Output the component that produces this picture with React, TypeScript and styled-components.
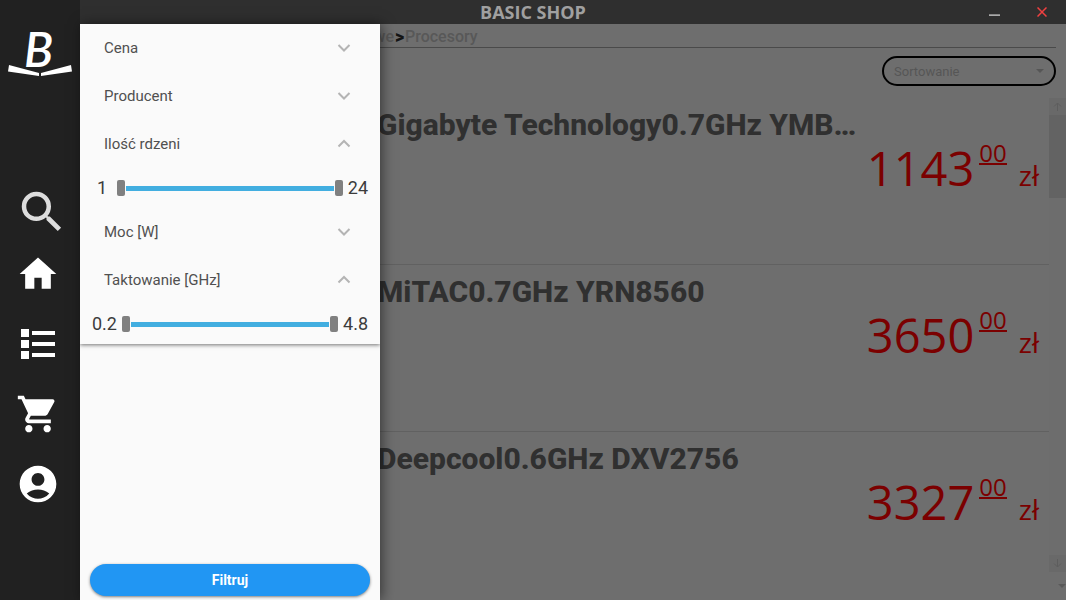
import React, { useState } from "react";
import styled, { createGlobalStyle } from "styled-components";
import {
  MdAccountCircle,
  MdHome,
  MdSearch,
  MdShoppingCart,
} from "react-icons/md";

const humanist = `"Open Sans", "Noto Sans", sans-serif`;

const GlobalStyle = createGlobalStyle`
  *, *::before, *::after { box-sizing: border-box; }
  html, body, #root { height: 100%; margin: 0; }
  body { font-family: Roboto, sans-serif; background: #6e6e6e; overflow: hidden; }
  button { border: 0; padding: 0; background: none; font: inherit; color: inherit; cursor: pointer; }
  svg { display: block; }
`;

const Shell = styled.div`
  display: flex;
  height: 100vh;
`;

const Sidebar = styled.nav`
  flex: 0 0 80px;
  display: flex;
  flex-direction: column;
  align-items: center;
  background: #212121;
  color: #ffffff;
`;

const LogoBox = styled.div`
  flex: 0 0 185px;
  padding-top: 18px;
`;

const NavButton = styled.button<{ $search?: boolean }>`
  display: flex;
  align-items: center;
  justify-content: center;
  width: 76px;
  height: ${(p) => (p.$search ? 54 : 70)}px;
  padding-left: ${(p) => (p.$search ? 8 : 0)}px;
  color: ${(p) => (p.$search ? "#dddddd" : "#ffffff")};
  align-self: flex-start;
`;

const Main = styled.div`
  flex: 1;
  min-width: 0;
  display: flex;
  flex-direction: column;
`;

const TitleBar = styled.header`
  flex: 0 0 24px;
  display: flex;
  padding-left: 16px;
  background: #2f2f2f;
`;

const AppTitle = styled.h1`
  flex: 1;
  margin: 0;
  text-align: center;
  font: 700 18px/24px ${humanist};
  color: #a0a0a0;
`;

const WindowButton = styled.button<{ $color: string }>`
  width: 48px;
  height: 24px;
  display: flex;
  align-items: center;
  justify-content: center;
  color: ${(p) => p.$color};
`;

const Stage = styled.div`
  position: relative;
  flex: 1;
  min-height: 0;
  display: flex;
  flex-direction: column;
  background: #6e6e6e;
`;

const Breadcrumbs = styled.div`
  flex: 0 0 24px;
  min-height: 0;
  display: flex;
  margin: 0 10px;
  border-bottom: 1px solid #4a4a4a;
  font-size: 16px;
  font-weight: 500;
  line-height: 25px;
  color: #585858;
`;

const Crumb = styled.a<{ $parent?: boolean }>`
  width: ${(p) => (p.$parent ? "304px" : "auto")};
  text-align: right;
  color: inherit;
  text-decoration: none;
`;

const Separator = styled.span`
  width: 11px;
  text-align: center;
  font-size: 18px;
  font-weight: 900;
  color: #141414;
`;

const Toolbar = styled.div`
  flex: 0 0 50px;
  display: flex;
  justify-content: flex-end;
  align-items: flex-start;
  padding: 8px 10px 0;
`;

const SortField = styled.label`
  position: relative;
  width: 174px;
  color: #565656;
  svg {
    position: absolute;
    right: 12px;
    top: 13px;
    pointer-events: none;
  }
`;

const SortSelect = styled.select`
  appearance: none;
  width: 100%;
  height: 30px;
  padding: 0 10px;
  border: 2px solid #000000;
  border-radius: 15px;
  background: transparent;
  color: inherit;
  font: 13px Roboto, sans-serif;
`;

const Results = styled.div`
  flex: 1;
  min-height: 0;
  display: flex;
`;

const ProductList = styled.ul`
  flex: 1;
  min-width: 0;
  margin: 0;
  padding: 0 0 0 10px;
  list-style: none;
  overflow: hidden;
`;

const Product = styled.li`
  display: grid;
  grid-template-columns: 287px minmax(0, 1fr);
  height: 167px;
  padding-right: 10px;
  border-bottom: 1px solid #616161;
  &:last-child {
    border-bottom: 0;
  }
`;

const ProductInfo = styled.div`
  grid-column: 2;
`;

const ProductName = styled.h2`
  margin: 0;
  padding-top: 9px;
  font-size: 30px;
  font-weight: 800;
  line-height: 36px;
  color: #303030;
  white-space: nowrap;
`;

const Price = styled.div`
  display: flex;
  justify-content: flex-end;
  align-items: baseline;
  font-family: ${humanist};
  font-size: 28px;
  line-height: 50px;
  color: #7b0000;
`;

const Whole = styled.span`
  font-size: 47px;
`;

const Cents = styled.sup`
  align-self: flex-start;
  margin: 0 12px 0 5px;
  border-bottom: 2px solid;
  font-size: 24px;
  line-height: 20px;
`;

const ScrollColumn = styled.div`
  flex: 0 0 17px;
  display: flex;
  flex-direction: column;
`;

const Scrollbar = styled.div`
  flex: 1;
  display: flex;
  flex-direction: column;
  background: #6d6d6d;
`;

const PageSizeButton = styled.button`
  height: 28px;
  display: flex;
  align-items: center;
  justify-content: flex-end;
  color: #5a5a5a;
`;

const ScrollArrow = styled.button`
  height: 17px;
  display: flex;
  align-items: center;
  justify-content: center;
  background: #696969;
  color: #5d5d5d;
`;

const ScrollTrack = styled.div`
  flex: 1;
`;

const ScrollThumb = styled.div`
  height: 83px;
  background: #636363;
`;

const Drawer = styled.aside`
  position: absolute;
  left: 0;
  top: 0;
  bottom: 0;
  width: 300px;
  display: flex;
  flex-direction: column;
  justify-content: space-between;
  background: #fafafa;
  box-shadow: 2px 0 12px rgba(0, 0, 0, 0.5);
`;

const Filters = styled.div`
  background: #fafafa;
  box-shadow: 0 1px 4px rgba(0, 0, 0, 0.55);
  clip-path: inset(0 0 -8px 0);
`;

const FilterHeader = styled.button`
  display: flex;
  width: 100%;
  height: 48px;
  align-items: center;
  justify-content: space-between;
  padding: 0 29px 0 24px;
  font-size: 15px;
  color: #505050;
`;

const RangeRow = styled.div`
  display: flex;
  align-items: center;
  gap: 5px;
  height: 40px;
  padding: 0 12px;
  font-size: 18px;
  line-height: 20px;
  color: #3c3c3c;
`;

const RangeValue = styled.output`
  min-width: 20px;
  text-align: center;
`;

const RangeTrack = styled.div`
  position: relative;
  flex: 1;
  height: 16px;
  padding: 6px 9px 5px;
  &::before {
    content: "";
    display: block;
    height: 5px;
    background: #42aee0;
  }
`;

const RangeInput = styled.input`
  position: absolute;
  inset: 0;
  width: 100%;
  height: 16px;
  margin: 0;
  appearance: none;
  background: transparent;
  pointer-events: none;
  &::-webkit-slider-thumb {
    appearance: none;
    pointer-events: auto;
    width: 8px;
    height: 16px;
    border-radius: 2px;
    background: #808080;
  }
`;

const DrawerFooter = styled.div`
  padding: 0 10px 4px;
`;

const ApplyButton = styled.button`
  width: 100%;
  height: 32px;
  border-radius: 16px;
  background: #2196f3;
  box-shadow: 0 1px 3px rgba(0, 0, 0, 0.5);
  color: #ffffff;
  font-size: 14px;
  font-weight: 700;
`;

const Logo = () => (
  <svg width="64" height="70" viewBox="0 0 64 70" fill="#ffffff" role="img" aria-label="Basic Shop">
    <text x="16" y="49" fontFamily="Lato, sans-serif" fontSize="48" fontStyle="italic" fontWeight="600">
      B
    </text>
    <path d="M1 47 L31 55 V58 L0 53.500 Z" />
    <path d="M63 47 L33 55 V58 L64 53.500 Z" />
  </svg>
);

const ListIcon = () => (
  <svg width="34" height="30" viewBox="0 0 34 30" fill="currentColor" aria-hidden="true">
    {[0, 11, 22].map((y) => (
      <React.Fragment key={y}>
        <rect x="0" y={y} width="8" height="8" />
        <rect x="11" y={y + 2} width="23" height="4" />
      </React.Fragment>
    ))}
  </svg>
);

const Chevron = ({ open }: { open: boolean }) => (
  <svg width="14" height="10" viewBox="0 0 14 10" fill="none" stroke="#b4b4b4" strokeWidth="2" aria-hidden="true">
    <path d={open ? "M1.500 7.500 L7 2 L12.500 7.500" : "M1.500 2 L7 7.500 L12.500 2"} />
  </svg>
);

const Triangle = () => (
  <svg width="8" height="4" viewBox="0 0 8 4" fill="currentColor" aria-hidden="true">
    <path d="M0 0 H8 L4 4 Z" />
  </svg>
);

const ArrowIcon = ({ down }: { down?: boolean }) => (
  <svg width="9" height="9" viewBox="0 0 9 9" fill="none" stroke="currentColor" aria-hidden="true">
    <path d={down ? "M4.500 0 V8 M1 4.500 L4.500 8 L8 4.500" : "M4.500 9 V1 M1 4.500 L4.500 1 L8 4.500"} />
  </svg>
);

function RangeFilter({ label, min, max, step }: { label: string; min: number; max: number; step: number }) {
  const [low, setLow] = useState(min);
  const [high, setHigh] = useState(max);
  return (
    <RangeRow>
      <RangeValue>{low}</RangeValue>
      <RangeTrack>
        <RangeInput
          type="range"
          aria-label={`${label} od`}
          min={min}
          max={max}
          step={step}
          value={low}
          onChange={(e) => setLow(Math.min(+e.target.value, high))}
        />
        <RangeInput
          type="range"
          aria-label={`${label} do`}
          min={min}
          max={max}
          step={step}
          value={high}
          onChange={(e) => setHigh(Math.max(+e.target.value, low))}
        />
      </RangeTrack>
      <RangeValue>{high}</RangeValue>
    </RangeRow>
  );
}

const filters = [
  { label: "Cena" },
  { label: "Producent" },
  { label: "Ilość rdzeni", range: { min: 1, max: 24, step: 1 } },
  { label: "Moc [W]" },
  { label: "Taktowanie [GHz]", range: { min: 0.2, max: 4.8, step: 0.1 } },
];

const products = [
  { name: "Gigabyte Technology0.7GHz YMB…", price: "1143" },
  { name: "MiTAC0.7GHz YRN8560", price: "3650" },
  { name: "Deepcool0.6GHz DXV2756", price: "3327" },
];

export default function App() {
  return (
    <Shell>
      <GlobalStyle />
      <Sidebar>
        <LogoBox>
          <Logo />
        </LogoBox>
        <NavButton $search aria-label="Szukaj">
          <MdSearch size={54} />
        </NavButton>
        <NavButton aria-label="Strona główna">
          <MdHome size={44} />
        </NavButton>
        <NavButton aria-label="Kategorie">
          <ListIcon />
        </NavButton>
        <NavButton aria-label="Koszyk">
          <MdShoppingCart size={44} />
        </NavButton>
        <NavButton aria-label="Konto">
          <MdAccountCircle size={44} />
        </NavButton>
      </Sidebar>
      <Main>
        <TitleBar>
          <AppTitle>BASIC SHOP</AppTitle>
          <WindowButton $color="#dedede" aria-label="Minimalizuj">
            <svg width="11" height="7" viewBox="0 0 11 7" fill="currentColor">
              <rect y="5.500" width="11" height="1.200" />
            </svg>
          </WindowButton>
          <WindowButton $color="#f04040" aria-label="Zamknij">
            <svg width="10" height="10" viewBox="0 0 10 10" stroke="currentColor" strokeWidth="1.500">
              <path d="M0.500 0.500 L9.500 9.500 M9.500 0.500 L0.500 9.500" />
            </svg>
          </WindowButton>
        </TitleBar>
        <Stage>
          <Breadcrumbs>
            <Crumb $parent href="#podzespoly">Podzespoły komputerowe</Crumb>
            <Separator>&gt;</Separator>
            <Crumb href="#procesory">Procesory</Crumb>
          </Breadcrumbs>
          <Toolbar>
            <SortField>
              <SortSelect aria-label="Sortowanie">
                <option>Sortowanie</option>
              </SortSelect>
              <Triangle />
            </SortField>
          </Toolbar>
          <Results>
            <ProductList>
              {products.map((product) => (
                <Product key={product.name}>
                  <ProductInfo>
                    <ProductName>{product.name}</ProductName>
                    <Price>
                      <Whole>{product.price}</Whole>
                      <Cents>00</Cents>
                      <span>zł</span>
                    </Price>
                  </ProductInfo>
                </Product>
              ))}
            </ProductList>
            <ScrollColumn>
              <Scrollbar>
                <ScrollArrow aria-label="W górę">
                  <ArrowIcon />
                </ScrollArrow>
                <ScrollTrack>
                  <ScrollThumb />
                </ScrollTrack>
                <ScrollArrow aria-label="W dół">
                  <ArrowIcon down />
                </ScrollArrow>
              </Scrollbar>
              <PageSizeButton aria-label="Liczba wyników">
                <Triangle />
              </PageSizeButton>
            </ScrollColumn>
          </Results>
          <Drawer>
            <Filters>
              {filters.map(({ label, range }) => (
                <div key={label}>
                  <FilterHeader aria-expanded={Boolean(range)}>
                    {label}
                    <Chevron open={Boolean(range)} />
                  </FilterHeader>
                  {range && <RangeFilter label={label} {...range} />}
                </div>
              ))}
            </Filters>
            <DrawerFooter>
              <ApplyButton>Filtruj</ApplyButton>
            </DrawerFooter>
          </Drawer>
        </Stage>
      </Main>
    </Shell>
  );
}
